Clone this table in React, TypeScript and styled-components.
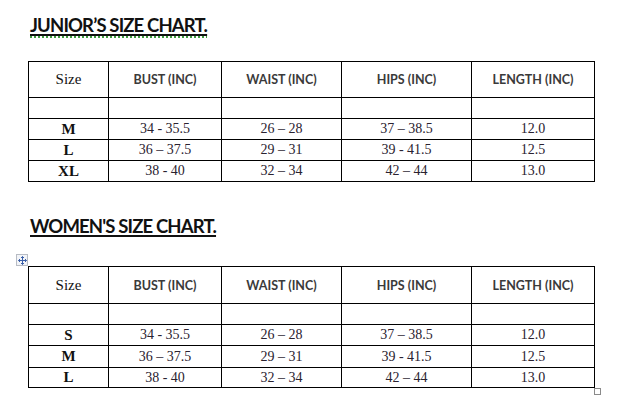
import React from "react";
import styled, { createGlobalStyle } from "styled-components";

const GlobalStyle = createGlobalStyle`
  html, body {
    margin: 0;
    padding: 0;
    background: #ffffff;
  }
`;

const Page = styled.div`
  width: 625px;
  height: 413px;
  overflow: hidden;
  box-sizing: border-box;
  padding: 14px 0 0 28px;
  display: flex;
  flex-direction: column;
`;

const Heading = styled.h2<{ spell?: boolean; top?: number }>`
  margin: ${p => p.top ?? 0}px 0 0 2px;
  font-family: "Lato", "Open Sans", sans-serif;
  font-weight: 700;
  font-size: 18.5px;
  line-height: 22px;
  letter-spacing: -0.85px;
  color: #111111;
  text-decoration: ${p => (p.spell ? "underline dotted #3f9b3f" : "none")};
  text-decoration-thickness: 1.5px;
  text-underline-offset: 4px;
  align-self: flex-start;

  span {
    text-decoration: underline;
    text-decoration-color: #111;
    text-decoration-thickness: 1.5px;
    text-underline-offset: 2px;
  }
`;

const TableWrap = styled.div<{ top: number }>`
  position: relative;
  margin-top: ${p => p.top}px;
`;

const Table = styled.table`
  border-collapse: collapse;
  table-layout: fixed;
  width: 567px;
`;

const Cell = styled.td<{ w?: number }>`
  border: 1px solid #000;
  padding: 0;
  text-align: center;
  vertical-align: middle;
  width: ${p => (p.w ? `${p.w}px` : "auto")};
  font-family: "Liberation Serif", "Times New Roman", serif;
  font-size: 14px;
  color: #2a2230;
`;

const HeadCell = styled(Cell)`
  font-family: "Lato", "Open Sans", sans-serif;
  font-weight: 700;
  font-size: 12.5px;
  color: #3a3a3a;
`;

const SizeHead = styled(Cell)`
  font-size: 15px;
  color: #111;
`;

const SizeCell = styled(Cell)`
  font-weight: 700;
  font-size: 15px;
  color: #111;
`;

const Row = styled.tr<{ h: number }>`
  height: ${p => p.h}px;
`;

const MoveHandle = styled.div`
  position: absolute;
  left: -12px;
  top: -12px;
  width: 10px;
  height: 10px;
  border: 1px solid #b8bcc4;
  background: #f2f4f8;
  display: flex;
  align-items: center;
  justify-content: center;
`;

const ResizeHandle = styled.div`
  position: absolute;
  left: 566px;
  bottom: -7px;
  width: 5px;
  height: 5px;
  border: 1px solid #8a8a8a;
  background: #fff;
`;

type Data = { size: string; bust: string; waist: string; hips: string; length: string };

const junior: Data[] = [
  { size: "M", bust: "34 - 35.5", waist: "26 – 28", hips: "37 – 38.5", length: "12.0" },
  { size: "L", bust: "36 – 37.5", waist: "29 – 31", hips: "39 - 41.5", length: "12.5" },
  { size: "XL", bust: "38 - 40", waist: "32 – 34", hips: "42 – 44", length: "13.0" },
];

const women: Data[] = [
  { size: "S", bust: "34 - 35.5", waist: "26 – 28", hips: "37 – 38.5", length: "12.0" },
  { size: "M", bust: "36 – 37.5", waist: "29 – 31", hips: "39 - 41.5", length: "12.5" },
  { size: "L", bust: "38 - 40", waist: "32 – 34", hips: "42 – 44", length: "13.0" },
];

const SizeTable = ({ rows, heights }: { rows: Data[]; heights: number[] }) => (
  <Table>
    <tbody>
      <Row h={heights[0]}>
        <SizeHead w={79}>Size</SizeHead>
        <HeadCell w={112}>BUST (INC)</HeadCell>
        <HeadCell w={119}>WAIST (INC)</HeadCell>
        <HeadCell w={129}>HIPS (INC)</HeadCell>
        <HeadCell>LENGTH (INC)</HeadCell>
      </Row>
      <Row h={heights[1]}>
        <Cell />
        <Cell />
        <Cell />
        <Cell />
        <Cell />
      </Row>
      {rows.map((r, i) => (
        <Row key={r.size} h={heights[i + 2]}>
          <SizeCell>{r.size}</SizeCell>
          <Cell>{r.bust}</Cell>
          <Cell>{r.waist}</Cell>
          <Cell>{r.hips}</Cell>
          <Cell>{r.length}</Cell>
        </Row>
      ))}
    </tbody>
  </Table>
);

export default function App() {
  return (
    <>
      <GlobalStyle />
      <Page>
        <Heading spell>
          <span>JUNIOR’S SIZE CHART.</span>
        </Heading>
        <TableWrap top={25}>
          <SizeTable rows={junior} heights={[36, 21, 21, 21, 21]} />
        </TableWrap>
        <Heading top={33}>
          <span>WOMEN'S SIZE CHART.</span>
        </Heading>
        <TableWrap top={29}>
          <MoveHandle>
            <svg width="9" height="9" viewBox="0 0 9 9">
              <path
                d="M4.5 0.5 L4.5 8.5 M0.5 4.5 L8.5 4.5 M3 2 L4.5 0.5 L6 2 M3 7 L4.5 8.5 L6 7 M2 3 L0.5 4.5 L2 6 M7 3 L8.5 4.5 L7 6"
                stroke="#3a5fa8"
                strokeWidth="1"
                fill="none"
              />
            </svg>
          </MoveHandle>
          <SizeTable rows={women} heights={[37, 21, 21, 22, 20]} />
          <ResizeHandle />
        </TableWrap>
      </Page>
    </>
  );
}
